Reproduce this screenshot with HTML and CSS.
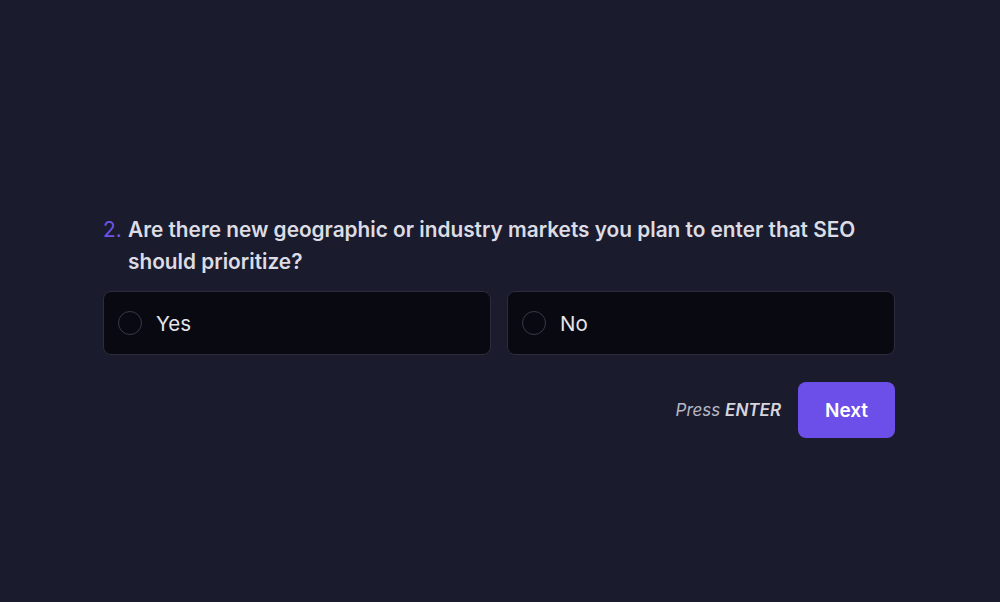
FILE: index.html
```html
<!DOCTYPE html>
<html lang="en">
<head>
  <meta charset="UTF-8" />
  <meta name="viewport" content="width=device-width, initial-scale=1.0" />
  <title>Question 2</title>
  <link rel="stylesheet" href="styles.css">
</head>
<body>
  <div class="question-wrap">
    <div class="question">
      <span class="num">2.</span>
      <span class="text">Are there new geographic or industry markets you plan to enter that SEO should prioritize?</span>
    </div>

    <div class="options">
      <div class="option">
        <span class="radio"></span>
        <span class="label">Yes</span>
      </div>
      <div class="option">
        <span class="radio"></span>
        <span class="label">No</span>
      </div>
    </div>

    <div class="actions">
      <span class="hint">Press <b>ENTER</b></span>
      <div class="next-button">Next</div>
    </div>
  </div>
</body>
</html>
```

FILE: styles.css
```css
body {
  margin: 0;
  font-family: Inter, "Noto Sans", sans-serif;
  background: #1b1b2e;
  height: 100vh;
}
.question-wrap {
  width: 792px;
  margin: 0 0 0 103px;
  padding-top: 214px;
}
.question {
  display: flex;
  font-size: 20.8px;
  line-height: 32px;
  font-weight: 600;
  color: #dcdce4;
}
.question .num {
  flex: 0 0 25px;
  color: #6d55e8;
  font-weight: 400;
}
.options {
  display: flex;
  gap: 16px;
  margin-top: 13px;
}
.option {
  flex: 1;
  height: 62px;
  display: flex;
  align-items: center;
  background: #090911;
  border: 1px solid #2c2c3c;
  border-radius: 8px;
  padding-left: 14px;
  cursor: pointer;
}
.radio {
  width: 22px;
  height: 22px;
  border: 1.5px solid #3a3a48;
  border-radius: 50%;
}
.label {
  margin-left: 14px;
  font-size: 20.5px;
  color: #e4e4ea;
}
.actions {
  display: flex;
  justify-content: flex-end;
  align-items: center;
  gap: 17px;
  margin-top: 27px;
}
.hint {
  font-style: italic;
  font-size: 17px;
  color: #b8b8c4;
}
.hint b {
  font-weight: 600;
  color: #d6d6de;
}
.next-button {
  width: 97px;
  height: 56px;
  display: flex;
  align-items: center;
  justify-content: center;
  background: #6b4fe8;
  color: #ffffff;
  font-size: 19px;
  font-weight: 600;
  border-radius: 8px;
  cursor: pointer;
}
```
